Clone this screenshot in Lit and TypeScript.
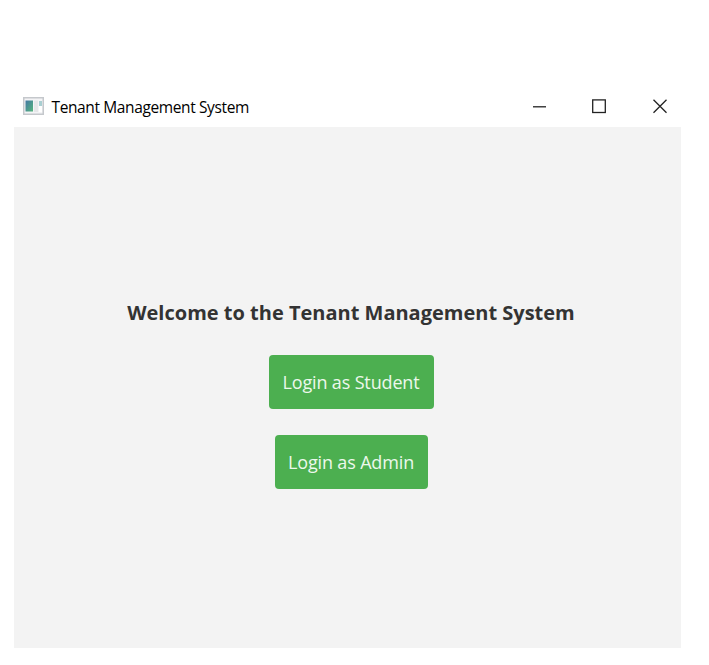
import { LitElement, html, css } from "lit";
import { customElement } from "lit/decorators.js";

@customElement("app-root")
class AppRoot extends LitElement {
  static styles = css`
    :host {
      display: block;
      box-sizing: border-box;
      width: 709px;
      height: 665px;
      padding: 86px 28px 17px 14px;
      background: #fff;
      font-family: "Open Sans", "Noto Sans", sans-serif;
      overflow: hidden;
    }
    .window { display: flex; flex-direction: column; height: 562px; }
    .titlebar { display: flex; align-items: center; height: 41px; padding: 0 0 1px 9px; box-sizing: border-box; }
    .titlebar svg { display: block; flex: none; }
    .title { margin-left: 7.5px; padding-top: 1px; flex: 1; font-size: 15.5px; line-height: 24px; letter-spacing: -0.38px; color: #000; white-space: nowrap; }
    .controls { display: flex; align-items: center; }
    .content {
      flex: 1;
      display: flex;
      flex-direction: column;
      align-items: center;
      box-sizing: border-box;
      padding: 172px 0 0 7px;
      background: #f3f3f3;
    }
    h1 { margin: 0 0 28px; font-size: 20px; line-height: 28px; font-weight: 700; color: #333; white-space: nowrap; }
    button {
      display: block;
      box-sizing: border-box;
      padding: 0;
      border: 0;
      border-radius: 4px;
      background: #4caf50;
      color: #ecf8ec;
      font: 400 18px/54px "Open Sans", "Noto Sans", sans-serif;
      letter-spacing: -0.15px;
      height: 54px;
      white-space: nowrap;
    }
    .student { width: 165px; margin-bottom: 26px; }
    .admin { width: 153px; line-height: 53px; }
  `;

  render() {
    return html`
      <div class="window">
        <div class="titlebar">
          <svg width="21" height="18" viewBox="0 0 21 18">
            <defs>
              <linearGradient id="pane" x1="0" y1="0" x2="1" y2="1">
                <stop offset="0" stop-color="#4478a4" />
                <stop offset="1" stop-color="#55b57c" />
              </linearGradient>
            </defs>
            <rect x="0.75" y="0.75" width="19.5" height="16.5" fill="#f4f4f6" stroke="#c5c8cc" stroke-width="1.5" />
            <rect x="2.5" y="3.5" width="7.5" height="11" fill="url(#pane)" />
            <rect x="11" y="3.5" width="4" height="11.5" fill="#e6e7e9" />
            <rect x="16" y="4" width="3" height="5" fill="#a9cfd2" />
            <rect x="16" y="9" width="3" height="6" fill="#fff" />
          </svg>
          <div class="title">Tenant Management System</div>
          <div class="controls">
            <svg width="154" height="40" viewBox="0 0 154 40" fill="none" stroke="#222" stroke-width="1.3">
              <path d="M6 20.8H19" />
              <rect x="65.7" y="13.9" width="12.6" height="12.6" />
              <path d="M126.5 13.8L139.5 26.8M139.5 13.8L126.5 26.8" />
            </svg>
          </div>
        </div>
        <div class="content">
          <h1>Welcome to the Tenant Management System</h1>
          <button class="student">Login as Student</button>
          <button class="admin">Login as Admin</button>
        </div>
      </div>
    `;
  }
}
